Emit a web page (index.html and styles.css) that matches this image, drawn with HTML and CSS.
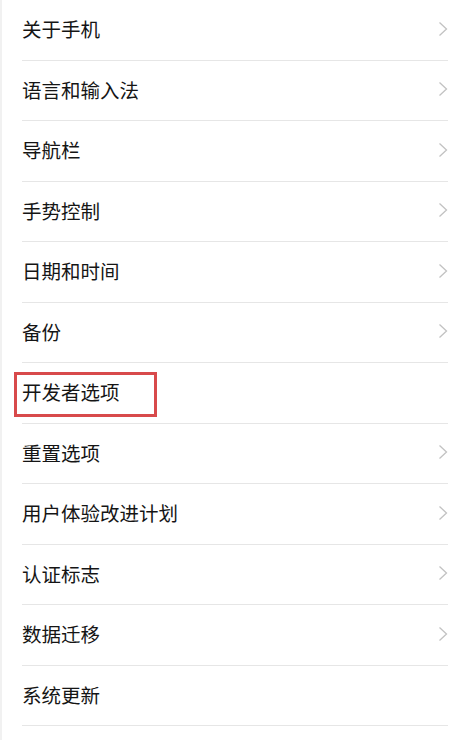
FILE: index.html
```html
<!DOCTYPE html>
<html>
<head>
    <link rel="stylesheet" href="styles.css">
</head>
<body>
    <ul class="settings-list">
        <li class="settings-item"><span>关于手机</span><svg class="chevron" viewBox="0 0 10 16"><path d="M1.5 1.5 L8.5 8 L1.5 14.5"/></svg></li>
        <li class="settings-item"><span>语言和输入法</span><svg class="chevron" viewBox="0 0 10 16"><path d="M1.5 1.5 L8.5 8 L1.5 14.5"/></svg></li>
        <li class="settings-item"><span>导航栏</span><svg class="chevron" viewBox="0 0 10 16"><path d="M1.5 1.5 L8.5 8 L1.5 14.5"/></svg></li>
        <li class="settings-item"><span>手势控制</span><svg class="chevron" viewBox="0 0 10 16"><path d="M1.5 1.5 L8.5 8 L1.5 14.5"/></svg></li>
        <li class="settings-item"><span>日期和时间</span><svg class="chevron" viewBox="0 0 10 16"><path d="M1.5 1.5 L8.5 8 L1.5 14.5"/></svg></li>
        <li class="settings-item"><span>备份</span><svg class="chevron" viewBox="0 0 10 16"><path d="M1.5 1.5 L8.5 8 L1.5 14.5"/></svg></li>
        <li class="settings-item highlighted"><span>开发者选项</span></li>
        <li class="settings-item"><span>重置选项</span><svg class="chevron" viewBox="0 0 10 16"><path d="M1.5 1.5 L8.5 8 L1.5 14.5"/></svg></li>
        <li class="settings-item"><span>用户体验改进计划</span><svg class="chevron" viewBox="0 0 10 16"><path d="M1.5 1.5 L8.5 8 L1.5 14.5"/></svg></li>
        <li class="settings-item"><span>认证标志</span><svg class="chevron" viewBox="0 0 10 16"><path d="M1.5 1.5 L8.5 8 L1.5 14.5"/></svg></li>
        <li class="settings-item"><span>数据迁移</span><svg class="chevron" viewBox="0 0 10 16"><path d="M1.5 1.5 L8.5 8 L1.5 14.5"/></svg></li>
        <li class="settings-item"><span>系统更新</span></li>
    </ul>
</body>
</html>
```

FILE: styles.css
```css
body {
    margin: 0;
    background-color: #fff;
    font-family: "Noto Sans CJK SC", "Noto Sans", sans-serif;
    border-left: 2px solid #f1f1f1;
    min-height: 740px;
    box-sizing: border-box;
}

.settings-list {
    list-style: none;
    margin: 0;
    padding: 0 19px 0 20px;
}

.settings-item {
    position: relative;
    display: flex;
    justify-content: space-between;
    align-items: center;
    height: 60.5px;
    box-sizing: border-box;
    padding-bottom: 2px;
    border-bottom: 1px solid #e6e6e6;
    font-size: 19.5px;
    color: #151515;
}

.chevron {
    width: 10px;
    height: 16px;
    fill: none;
    stroke: #c2c2c2;
    stroke-width: 1.3;
}

.highlighted::after {
    content: "";
    position: absolute;
    left: -8px;
    top: 9px;
    width: 143px;
    height: 45px;
    box-sizing: border-box;
    border: 3px solid #d84a4b;
}
```
